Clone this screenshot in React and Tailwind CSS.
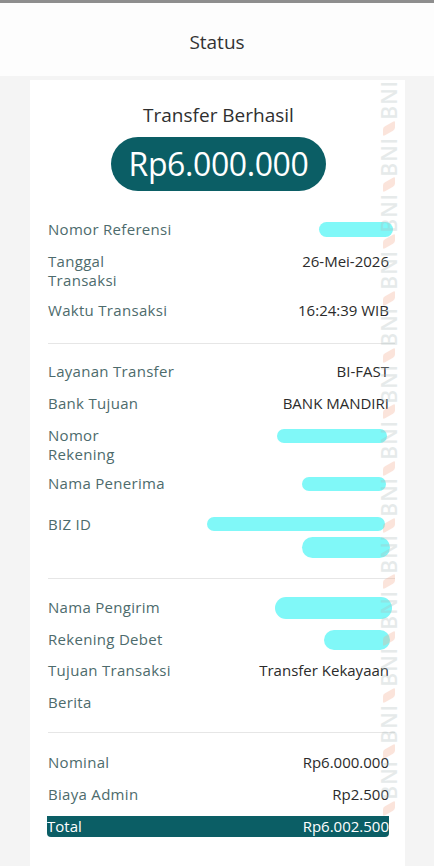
import React from 'react';

const Blob = ({ w, h = 15, className = '' }) => (
    <span className={`block rounded-full bg-[#80f8f8] ${className}`} style={{ width: w, height: h }} />
);

const Row = ({ label, children, className = '' }) => (
    <div className={`flex items-start justify-between leading-[19px] ${className}`}>
        <div className="text-[15px] tracking-[0.3px] text-[#4d6b6c]">{label}</div>
        <div className="text-[15px] text-[#2b2b2b] text-right flex flex-col items-end min-h-[19px]">{children}</div>
    </div>
);

const Watermark = () => (
    <div className="absolute top-0 bottom-0 right-[5px] w-[22px] overflow-hidden pointer-events-none select-none">
        <div className="flex flex-col items-center opacity-30">
            {Array.from({ length: 13 }).map((_, i) => (
                <div key={i} className="flex flex-col items-center">
                    <span className="[writing-mode:vertical-rl] rotate-180 text-[21px] leading-[22px] tracking-[1px] text-[#aebcbc] font-semibold">BNI</span>
                    <span className="my-[4px] w-[12px] h-[9px] bg-[#f5a88a] -skew-y-[30deg] rounded-[2px]" />
                </div>
            ))}
        </div>
    </div>
);

const App = () => {
    return (
        <div className="min-h-screen bg-[#f4f4f4] font-['Open_Sans',sans-serif] overflow-hidden">
            <div className="h-[3px] bg-[#8e8e8e]" />
            <header className="h-[73px] pt-[6px] bg-[#fdfdfd] flex items-center justify-center">
                <h1 className="text-[19px] text-[#333]">Status</h1>
            </header>

            <div className="pl-[30px] pr-[29px] pt-[4px]">
                <div className="relative bg-white pl-[18px] pr-[16px] pt-[22px] pb-[40px]">
                    <Watermark />

                    <div className="flex flex-col items-center">
                        <h2 className="text-[19px] leading-[26px] text-[#2f2f2f]">Transfer Berhasil</h2>
                        <div className="mt-[9px] h-[54px] w-[215px] rounded-full bg-[#0b5e65] flex items-center justify-center">
                            <span className="text-[32px] text-white tracking-[-0.4px]">Rp6.000.000</span>
                        </div>
                    </div>

                    {/* Referensi */}
                    <div className="mt-[29px] flex flex-col gap-[13px] pb-[23px]">
                        <Row label="Nomor Referensi"><Blob w={74} className="mt-[2px] mr-[-4px]" /></Row>
                        <Row label={<>Tanggal<br />Transaksi</>}>26-Mei-2026</Row>
                        <Row label="Waktu Transaksi" className="-mt-[2px]">16:24:39 WIB</Row>
                    </div>
                    <div className="h-px bg-[#e6e6e6] mr-[-6px]" />

                    {/* Tujuan */}
                    <div className="pt-[18px] pb-[20px] flex flex-col gap-[13px]">
                        <Row label="Layanan Transfer">BI-FAST</Row>
                        <Row label="Bank Tujuan">BANK MANDIRI</Row>
                        <Row label={<>Nomor<br />Rekening</>}><Blob w={110} h={14} className="mt-[3px] mr-[2px]" /></Row>
                        <Row label="Nama Penerima" className="-mt-[3px]"><Blob w={84} h={14} className="mt-[3px] mr-[3px]" /></Row>
                        <Row label="BIZ ID" className="mt-[9px]">
                            <Blob w={178} h={14} className="mt-[2px] mr-[4px]" />
                            <Blob w={88} h={21} className="mt-[6px] rounded-[8px] mr-[-1px]" />
                        </Row>
                    </div>
                    <div className="h-px bg-[#e6e6e6] mr-[-6px]" />

                    {/* Pengirim */}
                    <div className="pt-[19px] pb-[20px] flex flex-col gap-[13px]">
                        <Row label="Nama Pengirim"><Blob w={117} h={22} className="-mt-[1px] -mb-[2px] rounded-[8px] mr-[-3px]" /></Row>
                        <Row label="Rekening Debet"><Blob w={66} h={20} className="-mb-[1px] rounded-[8px] mr-[-1px]" /></Row>
                        <Row label="Tujuan Transaksi" className="-mt-[1px]">Transfer Kekayaan</Row>
                        <Row label="Berita"><span /></Row>
                    </div>
                    <div className="h-px bg-[#e6e6e6] mr-[-6px]" />

                    {/* Biaya */}
                    <div className="pt-[20px] flex flex-col gap-[13px]">
                        <Row label="Nominal">Rp6.000.000</Row>
                        <Row label="Biaya Admin">Rp2.500</Row>
                        <div className="-mt-[1px] ml-[-1px] h-[21px] bg-[#0b5e65] rounded-b-[4px] flex items-center justify-between text-[15px] text-white">
                            <span>Total</span>
                            <span>Rp6.002.500</span>
                        </div>
                    </div>
                </div>
            </div>
        </div>
    );
};

export default App;
